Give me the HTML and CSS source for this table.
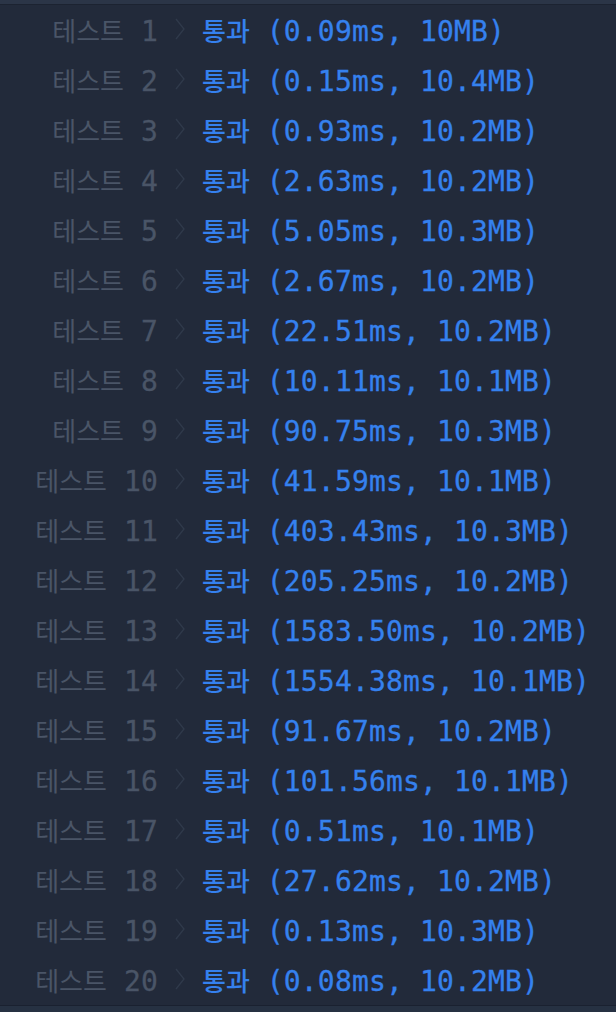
FILE: index.html
```html
<!DOCTYPE html>
<html lang="ko">
<head>
    <meta charset="UTF-8">
    <meta name="viewport" content="width=device-width, initial-scale=1.0">
    <title>채점 결과</title>
    <link rel="stylesheet" href="styles.css">
</head>
<body>
    <div class="top-bar"></div>

    <!-- Test results -->
    <div class="results" id="results"></div>

    <div class="bottom-bar"></div>

    <script>
        const results = [
            ['0.09', '10'], ['0.15', '10.4'], ['0.93', '10.2'], ['2.63', '10.2'],
            ['5.05', '10.3'], ['2.67', '10.2'], ['22.51', '10.2'], ['10.11', '10.1'],
            ['90.75', '10.3'], ['41.59', '10.1'], ['403.43', '10.3'], ['205.25', '10.2'],
            ['1583.50', '10.2'], ['1554.38', '10.1'], ['91.67', '10.2'], ['101.56', '10.1'],
            ['0.51', '10.1'], ['27.62', '10.2'], ['0.13', '10.3'], ['0.08', '10.2']
        ];

        const list = document.getElementById('results');

        results.forEach(([time, mem], i) => {
            const row = document.createElement('div');
            row.className = 'row';
            row.innerHTML =
                '<span class="label"><span class="ko">테스트</span> ' + (i + 1) + '</span>' +
                '<svg class="chevron" width="10" height="22" viewBox="0 0 10 22">' +
                '<path d="M1 1 L9 11 L1 21" fill="none" stroke="currentColor" stroke-width="1.3"/></svg>' +
                '<span class="result"><span class="ko">통과</span> (' + time + 'ms, ' + mem + 'MB)</span>';
            list.appendChild(row);
        });
    </script>
</body>
</html>
```

FILE: styles.css
```css
body {
    margin: 0;
    background: #222a3a;
    font-family: "DejaVu Sans Mono", "Noto Sans CJK KR", monospace;
    height: 100vh;
    display: flex;
    flex-direction: column;
}

.top-bar {
    height: 4px;
    background: #2b3547;
    border-bottom: 1px solid #1c2331;
}

.results {
    display: flex;
    flex-direction: column;
}

.row {
    box-sizing: border-box;
    height: 50px;
    padding-bottom: 2px;
    display: flex;
    align-items: center;
    font-size: 28px;
    letter-spacing: 0.15px;
    white-space: pre;
    -webkit-text-stroke: 0.3px currentColor;
}

.label {
    width: 158px;
    text-align: right;
    color: #4a5567;
}

.ko {
    font-family: "Noto Sans CJK KR", sans-serif;
    font-size: 26px;
    letter-spacing: 0;
    -webkit-text-stroke: 0;
}

.chevron {
    margin: 0 17px 0 17px;
    color: #303a4b;
}

.result {
    color: #3581ee;
}

.result .ko {
    font-weight: 500;
}

.bottom-bar {
    flex: 1;
    background: #263142;
    border-top: 1px solid #1a2130;
}
```
